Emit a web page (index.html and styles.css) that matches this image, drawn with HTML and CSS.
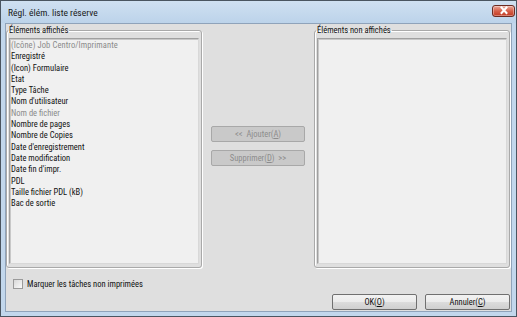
FILE: index.html
```html
<!DOCTYPE html>
<html lang="fr">
<head>
    <meta charset="UTF-8">
    <title>Régl. élém. liste réserve</title>
    <link rel="stylesheet" href="styles.css">
</head>
<body>
    <div class="window">
        <div class="titlebar">
            <span class="title">Régl. élém. liste réserve</span>
            <span class="close-btn">
                <svg width="12" height="9" viewBox="0 0 12 9">
                    <path d="M3.5 1.5 L8.5 7 M8.5 1.5 L3.5 7" stroke="#fff" stroke-width="2" stroke-linecap="square"/>
                </svg>
            </span>
        </div>
        <div class="client">
            <div class="columns">
                <fieldset class="group">
                    <legend>Éléments affichés</legend>
                    <div class="listbox">
                        <div class="item disabled icon-item">(Icône) Job Centro/Imprimante</div>
                        <div class="item">Enregistré</div>
                        <div class="item">(Icon) Formulaire</div>
                        <div class="item">Etat</div>
                        <div class="item">Type Tâche</div>
                        <div class="item">Nom d'utilisateur</div>
                        <div class="item disabled">Nom de fichier</div>
                        <div class="item">Nombre de pages</div>
                        <div class="item">Nombre de Copies</div>
                        <div class="item">Date d'enregistrement</div>
                        <div class="item">Date modification</div>
                        <div class="item">Date fin d'impr.</div>
                        <div class="item">PDL</div>
                        <div class="item">Taille fichier PDL (kB)</div>
                        <div class="item">Bac de sortie</div>
                    </div>
                </fieldset>

                <div class="move-buttons">
                    <button class="btn" disabled>&lt;&lt;&nbsp; Ajouter(<u>A</u>)</button>
                    <button class="btn" disabled>Supprimer(<u>D</u>)&nbsp; &gt;&gt;</button>
                </div>

                <fieldset class="group">
                    <legend>Éléments non affichés</legend>
                    <div class="listbox"></div>
                </fieldset>
            </div>

            <label class="check-row">
                <span class="checkbox"></span>
                Marquer les tâches non imprimées
            </label>

            <div class="dialog-buttons">
                <button class="btn">OK(<u>O</u>)</button>
                <button class="btn">Annuler(<u>C</u>)</button>
            </div>
        </div>
    </div>
</body>
</html>
```

FILE: styles.css
```css
* {
    box-sizing: border-box;
}

body {
    margin: 0;
    width: 517px;
    height: 317px;
    overflow: hidden;
    font-family: "Roboto Condensed", "Liberation Sans", Arial, sans-serif;
    font-size: 8.5px;
    color: #111;
}

.window {
    width: 517px;
    height: 317px;
    border: 1px solid #4a5560;
    background: #c2d7ec;
    padding: 0 4px 4px 4px;
    display: flex;
    flex-direction: column;
}

.titlebar {
    height: 22px;
    display: flex;
    align-items: center;
    justify-content: space-between;
    background: linear-gradient(#cfe0f1, #bcd3ea);
    margin: 0 -4px;
    padding: 0 1px 0 7px;
}

.title {
    font-size: 9.5px;
    color: #1a1a1a;
}

.close-btn {
    width: 23px;
    height: 12px;
    margin-top: -3px;
    border: 1px solid #6b2b22;
    border-radius: 3px;
    background: linear-gradient(#eaa99b, #d6604a 50%, #c23a22);
    box-shadow: inset 0 0 0 1px rgba(255, 255, 255, 0.35);
    display: flex;
    align-items: center;
    justify-content: center;
}

.client {
    flex: 1;
    background: #dfdfdf;
    border: 1px solid #8fa3ba;
    padding: 0 1px 0 0;
    display: flex;
    flex-direction: column;
}

.columns {
    display: flex;
    height: 244px;
}

.group {
    margin: 0;
    width: 196px;
    border: 1px solid #a9a9a9;
    border-radius: 3px;
    box-shadow: inset 1px 1px 0 #fff, 1px 1px 0 #fff;
    padding: 0 2px 3px 2px;
    display: flex;
}

.group legend {
    padding: 0 1px;
    margin-left: -1px;
    line-height: 12px;
}

.listbox {
    flex: 1;
    background: #f0f0f0;
    border: 1px solid #a0a0a0;
    border-right-color: #d8d8d8;
    border-bottom-color: #d8d8d8;
    box-shadow: inset 1px 1px 0 #c8c8c8;
    padding: 1px 0 0 1px;
    margin-top: 2px;
}

.item {
    height: 11.3px;
    line-height: 10px;
    white-space: nowrap;
}

.item.disabled {
    color: #8a8a8a;
}

.item.icon-item {
    letter-spacing: 0.1px;
}

.move-buttons {
    flex: 1;
    display: flex;
    flex-direction: column;
    align-items: center;
    gap: 8px;
    padding-top: 102px;
}

.btn {
    font-family: inherit;
    font-size: 8.5px;
    color: #111;
    height: 16px;
    width: 84px;
    padding: 0;
    border: 1px solid #707070;
    border-radius: 2px;
    background: linear-gradient(#f2f2f2, #ebebeb 50%, #dcdcdc 51%, #cfcfcf);
}

.move-buttons .btn {
    width: 94px;
    height: 16px;
}

.btn:disabled {
    color: #8d8d8d;
    background: #c9c9c9;
    border-color: #a8a8a8;
}

.check-row {
    display: flex;
    align-items: center;
    gap: 4px;
    margin: 11px 0 0 7px;
}

.checkbox {
    width: 10px;
    height: 10px;
    border: 1px solid #9a9a9a;
    background: linear-gradient(135deg, #d8d8d8, #fafafa);
}

.dialog-buttons {
    display: flex;
    justify-content: flex-end;
    gap: 8px;
    margin-top: 5px;
}

.dialog-buttons .btn {
    width: 85px;
}
```
